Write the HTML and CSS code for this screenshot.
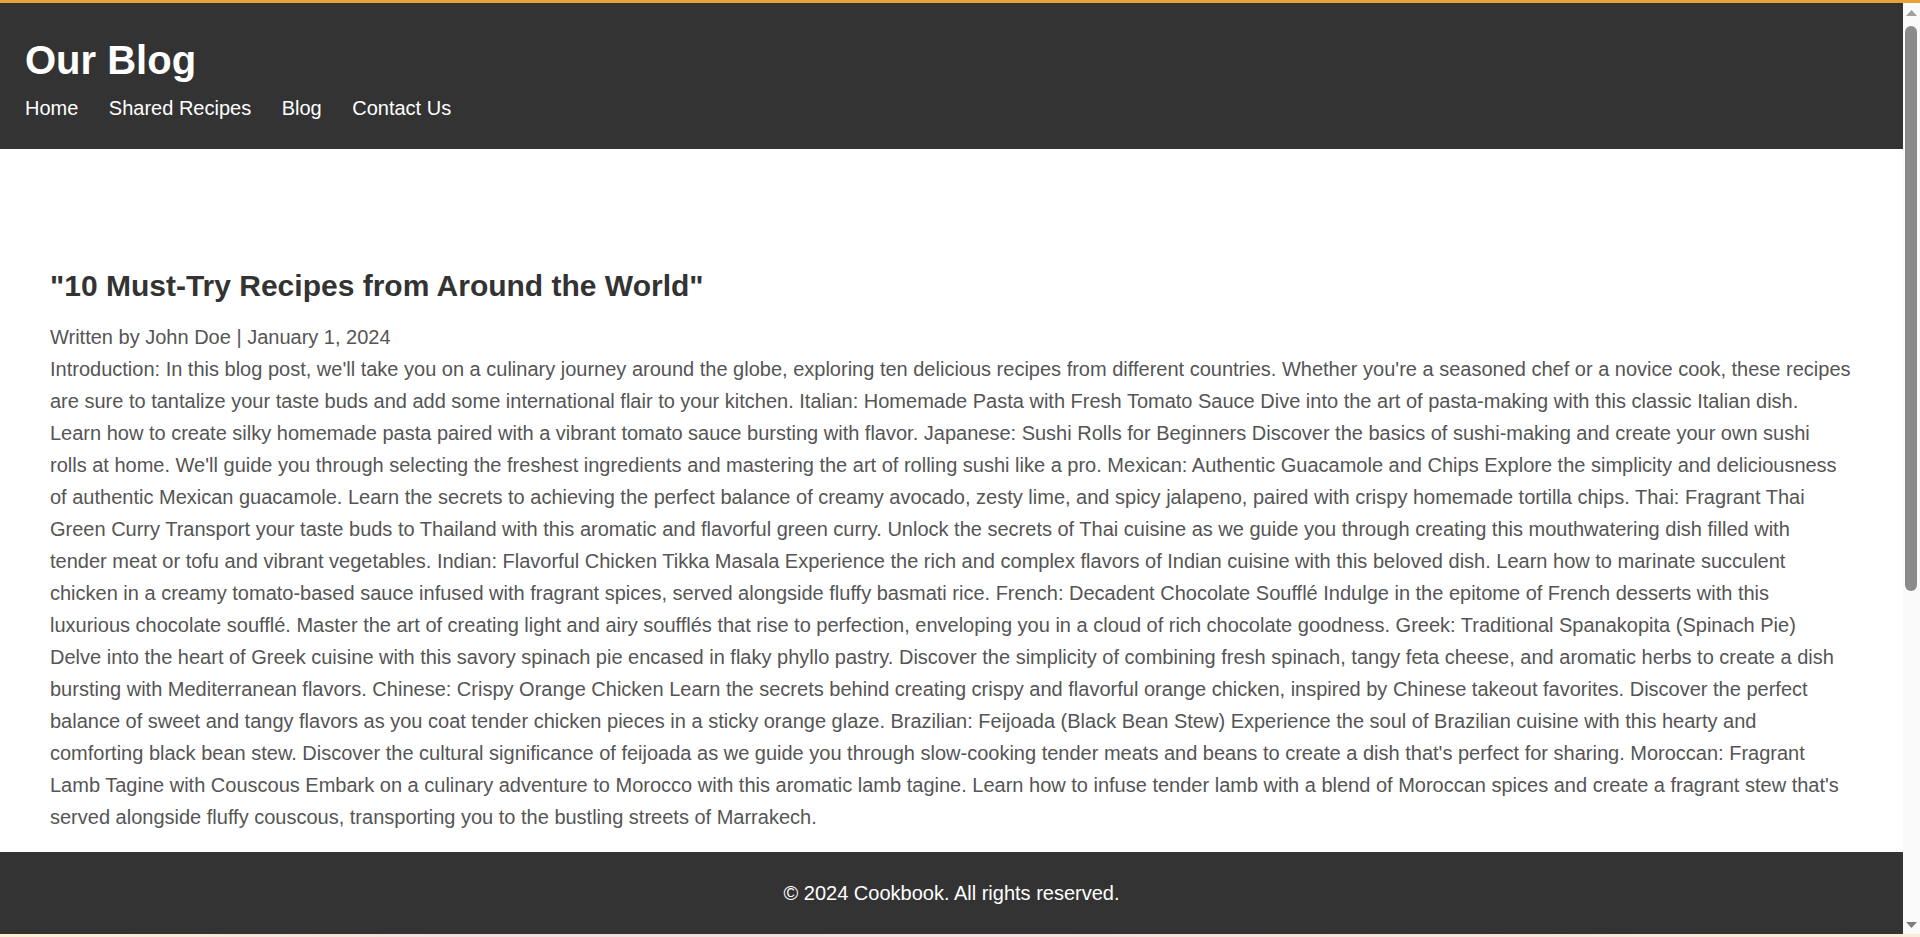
FILE: index.html
```html
<!DOCTYPE html>
<html lang="en">
<head>
<meta charset="utf-8">
<title>Our Blog</title>
<link rel="stylesheet" href="styles.css">
</head>
<body>
<div class="frame-top"></div>
<div class="window">
  <div class="viewport">
    <header class="site-header">
      <h1 class="site-title">Our Blog</h1>
      <nav class="site-nav">
        <a href="#">Home</a>
        <a href="#">Shared Recipes</a>
        <a href="#">Blog</a>
        <a href="#">Contact Us</a>
      </nav>
    </header>
    <main class="content">
      <article class="post">
        <h2 class="post-title">"10 Must-Try Recipes from Around the World"</h2>
        <p class="post-meta">Written by John Doe | January 1, 2024</p>
        <p class="post-body">Introduction: In this blog post, we'll take you on a culinary journey around the globe, exploring ten delicious recipes from different countries. Whether you're a seasoned chef or a novice cook, these recipes are sure to tantalize your taste buds and add some international flair to your kitchen. Italian: Homemade Pasta with Fresh Tomato Sauce Dive into the art of pasta-making with this classic Italian dish. Learn how to create silky homemade pasta paired with a vibrant tomato sauce bursting with flavor. Japanese: Sushi Rolls for Beginners Discover the basics of sushi-making and create your own sushi rolls at home. We'll guide you through selecting the freshest ingredients and mastering the art of rolling sushi like a pro. Mexican: Authentic Guacamole and Chips Explore the simplicity and deliciousness of authentic Mexican guacamole. Learn the secrets to achieving the perfect balance of creamy avocado, zesty lime, and spicy jalapeno, paired with crispy homemade tortilla chips. Thai: Fragrant Thai Green Curry Transport your taste buds to Thailand with this aromatic and flavorful green curry. Unlock the secrets of Thai cuisine as we guide you through creating this mouthwatering dish filled with tender meat or tofu and vibrant vegetables. Indian: Flavorful Chicken Tikka Masala Experience the rich and complex flavors of Indian cuisine with this beloved dish. Learn how to marinate succulent chicken in a creamy tomato-based sauce infused with fragrant spices, served alongside fluffy basmati rice. French: Decadent Chocolate Soufflé Indulge in the epitome of French desserts with this luxurious chocolate soufflé. Master the art of creating light and airy soufflés that rise to perfection, enveloping you in a cloud of rich chocolate goodness. Greek: Traditional Spanakopita (Spinach Pie) Delve into the heart of Greek cuisine with this savory spinach pie encased in flaky phyllo pastry. Discover the simplicity of combining fresh spinach, tangy feta cheese, and aromatic herbs to create a dish bursting with Mediterranean flavors. Chinese: Crispy Orange Chicken Learn the secrets behind creating crispy and flavorful orange chicken, inspired by Chinese takeout favorites. Discover the perfect balance of sweet and tangy flavors as you coat tender chicken pieces in a sticky orange glaze. Brazilian: Feijoada (Black Bean Stew) Experience the soul of Brazilian cuisine with this hearty and comforting black bean stew. Discover the cultural significance of feijoada as we guide you through slow-cooking tender meats and beans to create a dish that's perfect for sharing. Moroccan: Fragrant Lamb Tagine with Couscous Embark on a culinary adventure to Morocco with this aromatic lamb tagine. Learn how to infuse tender lamb with a blend of Moroccan spices and create a fragrant stew that's served alongside fluffy couscous, transporting you to the bustling streets of Marrakech.</p>
      </article>
    </main>
    <footer class="site-footer">
      <p class="footer-text">© 2024 Cookbook. All rights reserved.</p>
    </footer>
  </div>
  <div class="scrollbar" aria-hidden="true">
    <div class="sb-button">
      <svg width="17" height="17" viewBox="0 0 17 17"><polygon points="3,13 14,13 8.5,7" fill="#a0a0a0"/></svg>
    </div>
    <div class="sb-track">
      <div class="sb-thumb"></div>
    </div>
    <div class="sb-button">
      <svg width="17" height="17" viewBox="0 0 17 17"><polygon points="3,5 14,5 8.5,11" fill="#7e7e7e"/></svg>
    </div>
  </div>
</div>
<div class="frame-bottom"></div>
</body>
</html>
```

FILE: styles.css
```css
html, body {
  margin: 0;
  padding: 0;
  height: 100%;
  overflow: hidden;
}

body {
  display: flex;
  flex-direction: column;
  font-family: "Liberation Sans", Arial, sans-serif;
  background: #ffffff;
}

.frame-top {
  flex: 0 0 3px;
  background: #eba134;
}

.frame-bottom {
  flex: 0 0 3px;
  background: linear-gradient(to right, #fcf0d3 0%, #f3dede 25%, #f5e2dc 60%, #faecd6 100%);
}

.window {
  flex: 1 1 auto;
  min-height: 0;
  display: flex;
}

.viewport {
  flex: 1 1 auto;
  min-width: 0;
  overflow: hidden;
  background: #ffffff;
  display: flex;
  flex-direction: column;
}

.scrollbar {
  flex: 0 0 17px;
  display: flex;
  flex-direction: column;
  background: #fafafa;
}

.sb-button {
  flex: 0 0 17px;
  height: 17px;
}

.sb-button svg {
  display: block;
}

.sb-track {
  flex: 1 1 auto;
  padding: 6px 3px 0 2px;
}

.sb-thumb {
  height: 565px;
  background: #8b8b8b;
  border-radius: 6px;
}

.site-header {
  flex: 0 0 auto;
  background: #333333;
  color: #ffffff;
  padding: 34px 25px 29px;
}

.site-title {
  margin: 0 0 14px;
  font-size: 40px;
  line-height: 46px;
  font-weight: bold;
}

.site-nav {
  display: flex;
  gap: 30.5px;
  font-size: 20px;
  line-height: 23px;
}

.site-nav a {
  color: #ffffff;
  text-decoration: none;
}

.content {
  flex: 0 0 auto;
  padding: 119px 52px 566px 50px;
}

.post-title {
  margin: 0 0 18px;
  font-size: 30px;
  line-height: 35px;
  font-weight: bold;
  color: #333333;
}

.post-meta,
.post-body {
  margin: 0;
  font-size: 20px;
  line-height: 32px;
  color: #555555;
}

.site-footer {
  position: sticky;
  bottom: 0;
  flex: 0 0 auto;
  background: #333333;
  color: #ffffff;
  text-align: center;
  padding: 25px 20px;
}

.footer-text {
  margin: 0;
  font-size: 20px;
  line-height: 32px;
}
```
